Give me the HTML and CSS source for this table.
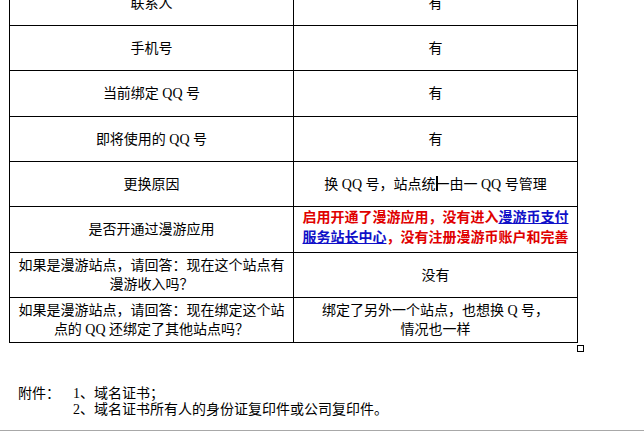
FILE: index.html
```html
<!DOCTYPE html>
<html lang="zh-CN">
<head>
<meta charset="utf-8">
<title>站点信息</title>
<link rel="stylesheet" href="styles.css">
</head>
<body>
<div class="page">
  <div class="table-wrap">
    <table class="info">
      <colgroup><col class="c1"><col class="c2"></colgroup>
      <tr><td>联系人</td><td>有</td></tr>
      <tr><td>手机号</td><td>有</td></tr>
      <tr class="tall"><td>当前绑定 QQ 号</td><td>有</td></tr>
      <tr><td>即将使用的 QQ 号</td><td>有</td></tr>
      <tr><td>更换原因</td><td>换 QQ 号，站点统<span class="caret"></span>一由一 QQ 号管理</td></tr>
      <tr class="tall"><td>是否开通过漫游应用</td><td class="top"><div class="note"><span class="red">启用开通了漫游应用，没有进入</span><a class="blue" href="#">漫游币支付服务站长中心</a><span class="red">，没有注册漫游币账户和完善</span></div></td></tr>
      <tr><td><div class="wrap">如果是漫游站点，请回答：现在这个站点有漫游收入吗？</div></td><td>没有</td></tr>
      <tr><td><div class="wrap">如果是漫游站点，请回答：现在绑定这个站点的 QQ 还绑定了其他站点吗？</div></td><td><div class="wrap">绑定了另外一个站点，也想换 Q 号，<br>情况也一样</div></td></tr>
    </table>
    <span class="handle"></span>
  </div>
  <div class="attach">
    <div class="label">附件：</div>
    <div class="items">
      <div>1、域名证书；</div>
      <div>2、域名证书所有人的身份证复印件或公司复印件。</div>
    </div>
  </div>
</div>
<div class="frame-edge"></div>
</body>
</html>
```
FILE: styles.css
```css
html, body {
  margin: 0;
  padding: 0;
  background: #fff;
  overflow: hidden;
}
body {
  font-family: "Liberation Serif", "Noto Sans CJK SC", serif;
  font-size: 14px;
  color: #000;
}
.page {
  margin-top: -20px;
  padding-left: 9px;
}
.table-wrap {
  position: relative;
  width: 569px;
}
.info {
  border-collapse: collapse;
  table-layout: fixed;
  width: 569px;
}
.info col.c1, .info col.c2 { width: 284px; }
.info tr { height: 45px; }
.info tr.tall { height: 46px; }
.info td {
  border: 1px solid #000;
  padding: 0 8px;
  text-align: center;
  vertical-align: middle;
  line-height: 19px;
}
.info td.top {
  vertical-align: top;
  padding-top: 1px;
}
.wrap {
  width: 266px;
  margin: 0 auto;
}
.note {
  width: 266px;
  margin: 0 auto;
  font-weight: bold;
  line-height: 20px;
  text-align: center;
}
.red { color: #e00000; }
.blue { color: #1010c8; text-decoration: underline; }
.caret {
  display: inline-block;
  width: 2px;
  height: 15px;
  background: #000;
  vertical-align: -2px;
  margin-right: -2px;
}
.handle {
  position: absolute;
  left: 568px;
  bottom: -9px;
  width: 5px;
  height: 5px;
  border: 1px solid #000;
  background: #fff;
}
.attach {
  display: flex;
  margin-top: 43px;
  padding-left: 9px;
  line-height: 16px;
}
.label { width: 55px; }
.frame-edge {
  position: fixed;
  left: 0;
  right: 0;
  bottom: 0;
  height: 1px;
  background: #a8a8a8;
}
```
